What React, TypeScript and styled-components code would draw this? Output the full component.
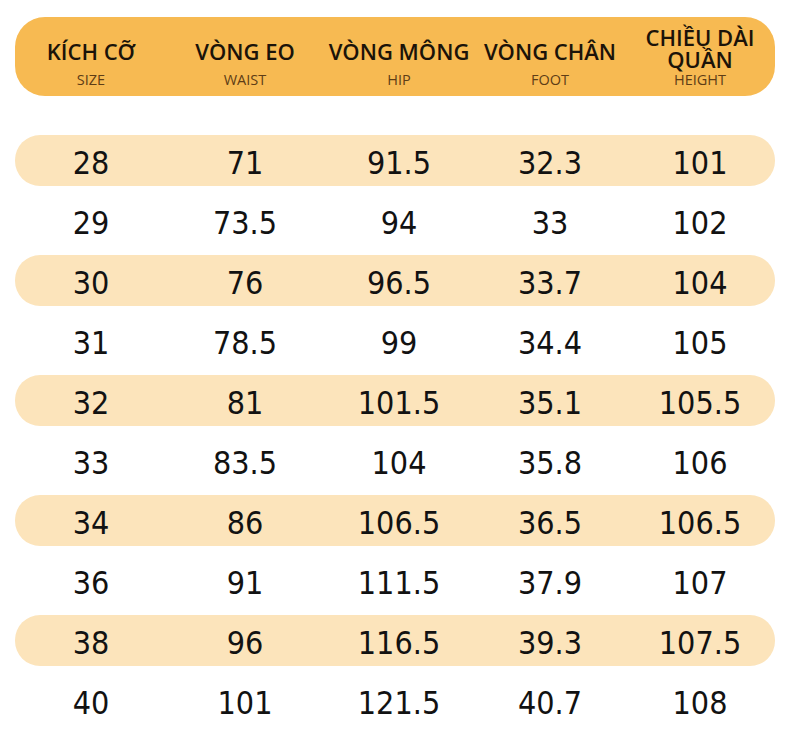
import React from "react";
import styled, { createGlobalStyle } from "styled-components";

const GlobalStyle = createGlobalStyle`
  html, body { margin: 0; padding: 0; background: #ffffff; }
  body { font-family: "Open Sans", "Noto Sans", sans-serif; }
`;

const Page = styled.div`
  width: 790px;
  height: 731px;
  box-sizing: border-box;
  padding: 17px 15px 0 15px;
  display: flex;
  flex-direction: column;
  background: #ffffff;
  overflow: hidden;
`;

const cols = "152px 156px 152px 150px 150px";

const HeaderBar = styled.div`
  height: 79px;
  box-sizing: border-box;
  border-radius: 30px;
  background: #f7ba52;
  display: grid;
  grid-template-columns: ${cols};
  padding-bottom: 8px;
`;

const HeadCell = styled.div<{ $tight?: boolean }>`
  display: flex;
  flex-direction: column;
  align-items: center;
  justify-content: flex-end;
  gap: ${(p) => (p.$tight ? "2px" : "9px")};
`;

const HeadMain = styled.div<{ $tight?: boolean }>`
  font-family: "Open Sans", "Noto Sans", sans-serif;
  font-weight: 600;
  font-size: 22px;
  line-height: ${(p) => (p.$tight ? "22px" : "24px")};
  color: #1b1309;
  text-align: center;
  white-space: nowrap;
`;

const HeadSub = styled.div`
  font-family: "Open Sans", "Noto Sans", sans-serif;
  font-weight: 400;
  font-size: 14.5px;
  line-height: 16px;
  color: #5e3d16;
  text-align: center;
`;

const Rows = styled.div`
  margin-top: 39px;
  display: flex;
  flex-direction: column;
  gap: 9px;
`;

const Row = styled.div<{ $shaded: boolean }>`
  height: 51px;
  box-sizing: border-box;
  padding-top: 4px;
  border-radius: 25px;
  background: ${(p) => (p.$shaded ? "#fce4bb" : "transparent")};
  display: grid;
  grid-template-columns: ${cols};
  align-items: center;
`;

const Cell = styled.div`
  font-family: "DejaVu Sans Condensed", "DejaVu Sans", sans-serif;
  font-stretch: condensed;
  font-size: 32px;
  color: #121212;
  text-align: center;
  white-space: nowrap;
`;

const headers: { main: string[]; sub: string }[] = [
  { main: ["KÍCH CỠ"], sub: "SIZE" },
  { main: ["VÒNG EO"], sub: "WAIST" },
  { main: ["VÒNG MÔNG"], sub: "HIP" },
  { main: ["VÒNG CHÂN"], sub: "FOOT" },
  { main: ["CHIỀU DÀI", "QUẦN"], sub: "HEIGHT" },
];

const data: string[][] = [
  ["28", "71", "91.5", "32.3", "101"],
  ["29", "73.5", "94", "33", "102"],
  ["30", "76", "96.5", "33.7", "104"],
  ["31", "78.5", "99", "34.4", "105"],
  ["32", "81", "101.5", "35.1", "105.5"],
  ["33", "83.5", "104", "35.8", "106"],
  ["34", "86", "106.5", "36.5", "106.5"],
  ["36", "91", "111.5", "37.9", "107"],
  ["38", "96", "116.5", "39.3", "107.5"],
  ["40", "101", "121.5", "40.7", "108"],
];

export default function App() {
  return (
    <>
      <GlobalStyle />
      <Page>
        <HeaderBar>
          {headers.map((h) => {
            const tight = h.main.length > 1;
            return (
              <HeadCell key={h.sub} $tight={tight}>
                <HeadMain $tight={tight}>
                  {h.main.map((line) => (
                    <div key={line}>{line}</div>
                  ))}
                </HeadMain>
                <HeadSub>{h.sub}</HeadSub>
              </HeadCell>
            );
          })}
        </HeaderBar>
        <Rows>
          {data.map((r, i) => (
            <Row key={r[0]} $shaded={i % 2 === 0}>
              {r.map((v, j) => (
                <Cell key={j}>{v}</Cell>
              ))}
            </Row>
          ))}
        </Rows>
      </Page>
    </>
  );
}
